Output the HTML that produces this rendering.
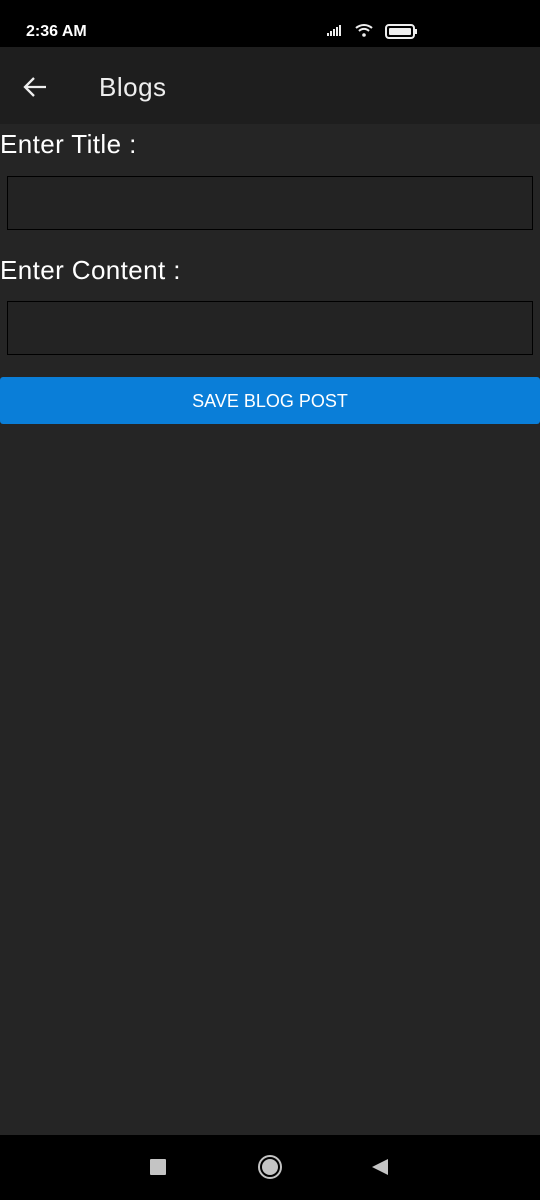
<!DOCTYPE html>
<html><head><style>
*{margin:0;padding:0;box-sizing:border-box}
body{width:540px;height:1200px;background:#252525;font-family:"Liberation Sans",Roboto,sans-serif;position:relative;overflow:hidden;color:#eee}
.abs{position:absolute}
</style></head><body>
<div class="abs" style="left:0;top:0;width:540px;height:47px;background:#000"></div>
<div class="abs" style="left:26px;top:23px;font-size:16px;font-weight:bold;color:#fff">2:36 AM</div>
<svg class="abs" style="left:318px;top:22px" width="104" height="20" viewBox="0 0 104 20">
<g fill="#eee"><rect x="9" y="11" width="2" height="3"/><rect x="12" y="9" width="2" height="5"/><rect x="15" y="7" width="2" height="7"/><rect x="18" y="5" width="2" height="9"/><rect x="21" y="3" width="2" height="11"/></g>
<g fill="none" stroke="#eee" stroke-width="2"><path d="M38 6a12 12 0 0 1 16 0"/><path d="M41 9a7 7 0 0 1 10 0"/></g>
<circle cx="46" cy="13" r="1.8" fill="#eee"/>
<rect x="68" y="3" width="28" height="13" rx="3" fill="none" stroke="#eee" stroke-width="2"/>
<rect x="71" y="6" width="22" height="7" rx="1" fill="#eee"/>
<rect x="97" y="7" width="2" height="5" fill="#eee"/>
</svg>
<div class="abs" style="left:0;top:47px;width:540px;height:77px;background:#1e1e1e"></div>
<svg class="abs" style="left:22px;top:74px" width="26" height="26" viewBox="0 0 26 26"><path d="M24 13H3M12 4l-9 9 9 9" fill="none" stroke="#eee" stroke-width="2.3"/></svg>
<div class="abs" style="left:99px;top:72px;font-size:26px;font-weight:500;color:#eee;letter-spacing:0.5px">Blogs</div>
<div class="abs" style="left:0;top:129px;font-size:26px;color:#fff;letter-spacing:0.4px">Enter Title :</div>
<div class="abs" style="left:7px;top:176px;width:526px;height:54px;border:1.5px solid #000;background:#232323"></div>
<div class="abs" style="left:0;top:255px;font-size:26px;color:#fff;letter-spacing:0.4px">Enter Content :</div>
<div class="abs" style="left:7px;top:301px;width:526px;height:54px;border:1.5px solid #000;background:#232323"></div>
<div class="abs" style="left:0;top:377px;width:540px;height:47px;background:#0a7ed8;border-radius:3px;color:#fff;font-size:18px;text-align:center;line-height:49px">SAVE BLOG POST</div>
<div class="abs" style="left:0;top:1135px;width:540px;height:65px;background:#000"></div>
<div class="abs" style="left:150px;top:1159px;width:16px;height:16px;background:#c4c4c4;border-radius:1px"></div>
<div class="abs" style="left:258px;top:1155px;width:24px;height:24px;border:2px solid #c4c4c4;border-radius:50%"></div>
<div class="abs" style="left:262px;top:1159px;width:16px;height:16px;background:#c4c4c4;border-radius:50%"></div>
<svg class="abs" style="left:371px;top:1158px" width="18" height="18"><path d="M1 9L17 1V17Z" fill="#c4c4c4"/></svg>
</body></html>
